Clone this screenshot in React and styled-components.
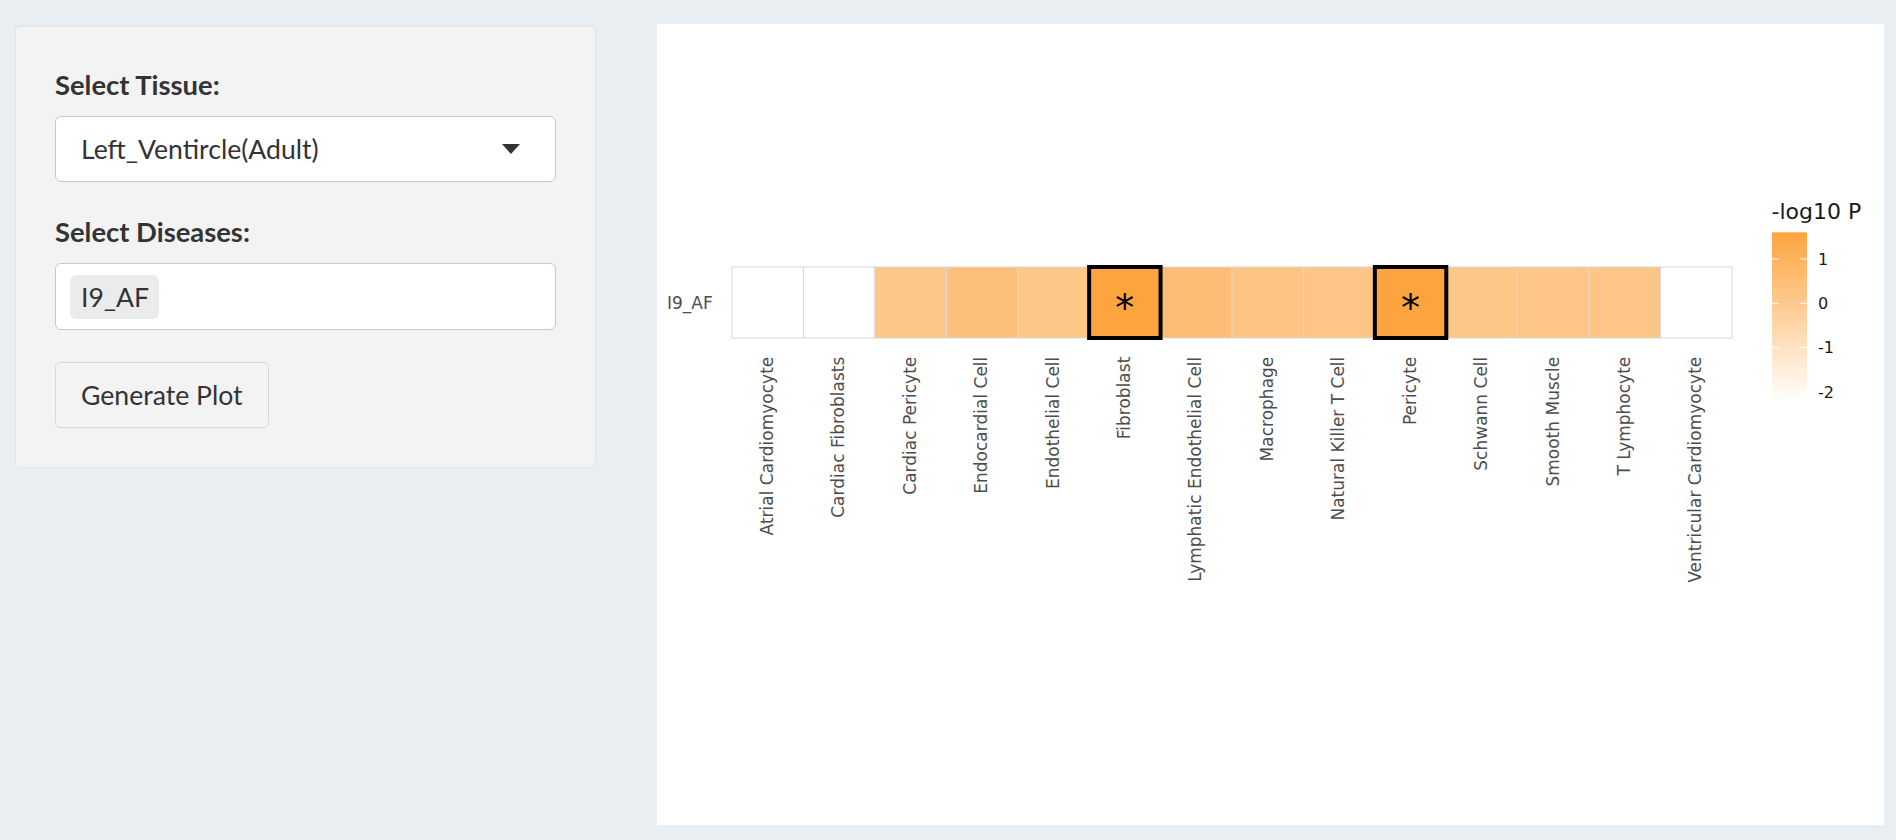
import React from "react";
import styled, { createGlobalStyle } from "styled-components";

const GlobalStyle = createGlobalStyle`
  body {
    margin: 0;
    background: #e9eef2;
    font-family: Lato, "Liberation Sans", sans-serif;
    color: #333;
  }
`;

const Page = styled.div`
  display: grid;
  grid-template-columns: 581px 1227px;
  column-gap: 61px;
  align-items: start;
  padding: 24px 0 0 15px;
  height: 840px;
  box-sizing: border-box;
`;

const Sidebar = styled.form`
  margin-top: 1px;
  display: flex;
  flex-direction: column;
  padding: 39px;
  background: #f3f3f3;
  border: 1px solid #e3e3e3;
  border-radius: 5px;
  box-shadow: inset 0 1px 1px rgba(0, 0, 0, 0.05);
`;

const FormGroup = styled.div`
  display: flex;
  flex-direction: column;
  margin-bottom: ${props => props.$gap}px;
`;

const Label = styled.label`
  font-size: 27.4px;
  font-weight: 700;
  line-height: 40px;
  margin-bottom: 11px;
`;

const SelectBox = styled.div`
  display: flex;
  align-items: center;
  justify-content: space-between;
  height: 66px;
  box-sizing: border-box;
  padding: 0 35px 0 25px;
  background: #fff;
  border: 1px solid #c8c8c8;
  border-radius: 6px;
  font-size: 26.6px;
`;

const Caret = styled.span`
  width: 0;
  height: 0;
  border-left: 9.5px solid transparent;
  border-right: 9.5px solid transparent;
  border-top: 10px solid #333;
`;

const TagInput = styled.div`
  display: flex;
  align-items: center;
  height: 67px;
  box-sizing: border-box;
  padding: 0 14px;
  background: #fff;
  border: 1px solid #c8c8c8;
  border-radius: 6px;
`;

const Tag = styled.span`
  padding: 0 10px 0 11px;
  background: #ebebeb;
  border-radius: 6px;
  font-size: 26.6px;
  line-height: 44px;
`;

const Button = styled.button`
  align-self: flex-start;
  height: 66px;
  padding: 0 25px;
  background: #f3f3f3;
  border: 1px solid #d9d9d9;
  border-radius: 5px;
  font-family: inherit;
  font-size: 26.6px;
  color: #333;
`;

const PlotPanel = styled.div`
  width: 1227px;
  height: 801px;
  background: #fff;
`;

const AxisText = styled.text`
  font-family: "DejaVu Sans", sans-serif;
  font-size: 17px;
  fill: #4d4d4d;
`;

const LegendText = styled.text`
  font-family: "DejaVu Sans", sans-serif;
  font-size: ${props => props.$size}px;
  fill: #1a1a1a;
`;

const Star = styled.text`
  font-family: "DejaVu Sans", sans-serif;
  font-size: 38px;
  fill: #000;
`;

const cells = [
  { name: "Atrial Cardiomyocyte", fill: "#ffffff" },
  { name: "Cardiac Fibroblasts", fill: "#ffffff" },
  { name: "Cardiac Pericyte", fill: "#fdc788" },
  { name: "Endocardial Cell", fill: "#fdbf7b" },
  { name: "Endothelial Cell", fill: "#fdc788" },
  { name: "Fibroblast", fill: "#fda43e", sig: true },
  { name: "Lymphatic Endothelial Cell", fill: "#fdbd77" },
  { name: "Macrophage", fill: "#fdc482" },
  { name: "Natural Killer T Cell", fill: "#fdc686" },
  { name: "Pericyte", fill: "#fda43e", sig: true },
  { name: "Schwann Cell", fill: "#fdc788" },
  { name: "Smooth Muscle", fill: "#fdc586" },
  { name: "T Lymphocyte", fill: "#fdc686" },
  { name: "Ventricular Cardiomyocyte", fill: "#ffffff" },
];

const X0 = 75;
const TILE_W = 1000 / 14;
const Y0 = 243;
const TILE_H = 71;

const legendTicks = [
  { label: "1", y: 235 },
  { label: "0", y: 279.3 },
  { label: "-1", y: 323.3 },
  { label: "-2", y: 367.7 },
];

function Heatmap() {
  return (
    <svg width="1227" height="801">
      <defs>
        <linearGradient id="legendFill" x1="0" y1="0" x2="0" y2="1">
          <stop offset="0" stopColor="#fda43e" />
          <stop offset="1" stopColor="#ffffff" />
        </linearGradient>
      </defs>

      {cells.map((c, i) => (
        <rect key={c.name} x={X0 + i * TILE_W} y={Y0} width={TILE_W} height={TILE_H}
          fill={c.fill} stroke="#d9d9d9" strokeWidth="1" />
      ))}

      {cells.map((c, i) => c.sig && (
        <g key={c.name + "-sig"}>
          <rect x={X0 + i * TILE_W} y={Y0} width={TILE_W} height={TILE_H}
            fill="none" stroke="#000" strokeWidth="4" />
          <Star x={X0 + (i + 0.5) * TILE_W} y={296.5} textAnchor="middle">*</Star>
        </g>
      ))}

      <AxisText x="55.7" y="285" textAnchor="end">I9_AF</AxisText>

      {cells.map((c, i) => (
        <AxisText key={c.name + "-label"} textAnchor="end" dy="0.3em"
          transform={`translate(${X0 + (i + 0.5) * TILE_W} 332.7) rotate(-90)`}>
          {c.name}
        </AxisText>
      ))}

      <LegendText $size={22} x="1114.5" y="195">-log10 P</LegendText>
      <rect x="1115" y="208.3" width="35" height="169.4" fill="url(#legendFill)" />
      {legendTicks.map(t => (
        <g key={t.label}>
          <line x1="1115" x2="1122" y1={t.y} y2={t.y} stroke="#fff" strokeWidth="1" />
          <line x1="1143" x2="1150" y1={t.y} y2={t.y} stroke="#fff" strokeWidth="1" />
          <LegendText $size={16} x="1161" y={t.y + 5.8}>{t.label}</LegendText>
        </g>
      ))}
    </svg>
  );
}

export default function App() {
  return (
    <>
      <GlobalStyle />
      <Page>
        <Sidebar onSubmit={e => e.preventDefault()}>
          <FormGroup $gap={30}>
            <Label>Select Tissue:</Label>
            <SelectBox>
              <span>Left_Ventircle(Adult)</span>
              <Caret />
            </SelectBox>
          </FormGroup>
          <FormGroup $gap={32}>
            <Label>Select Diseases:</Label>
            <TagInput>
              <Tag>I9_AF</Tag>
            </TagInput>
          </FormGroup>
          <Button type="button">Generate Plot</Button>
        </Sidebar>
        <PlotPanel>
          <Heatmap />
        </PlotPanel>
      </Page>
    </>
  );
}
